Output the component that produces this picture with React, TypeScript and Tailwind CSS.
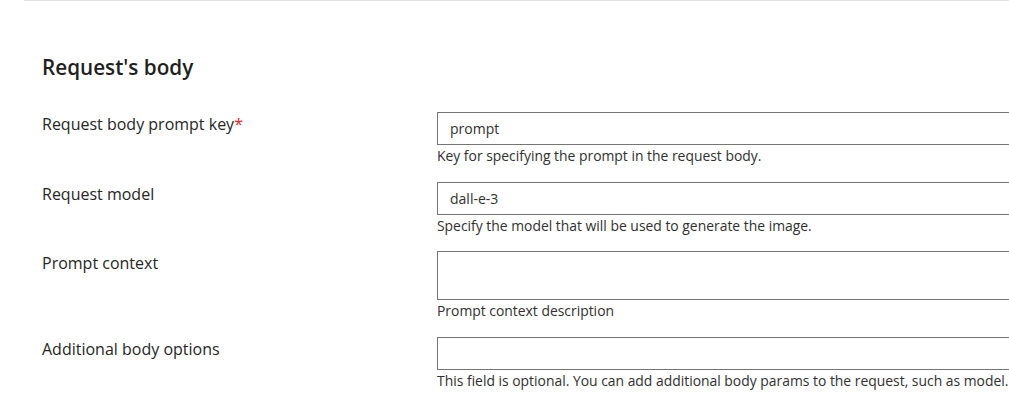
import React from "react";

type Field = {
  label: string;
  required?: boolean;
  value: string;
  note: string;
  multiline?: boolean;
};

const fields: Field[] = [
  {
    label: "Request body prompt key",
    required: true,
    value: "prompt",
    note: "Key for specifying the prompt in the request body.",
  },
  {
    label: "Request model",
    value: "dall-e-3",
    note: "Specify the model that will be used to generate the image.",
  },
  {
    label: "Prompt context",
    value: "",
    note: "Prompt context description",
    multiline: true,
  },
  {
    label: "Additional body options",
    value: "",
    note: "This field is optional. You can add additional body params to the request, such as model.",
  },
];

const App = () => {
  return (
    <div className="w-full h-[411px] overflow-hidden bg-white pl-6 font-['Open_Sans',sans-serif] text-[#303030]">
      <div className="w-[1200px] border-t border-[#e3e3e3] pl-[18px]">
        <h2 className="mt-[52px] text-[20.7px] leading-7 font-semibold text-[#1f1f1f]">
          Request&apos;s body
        </h2>

        <div className="mt-[31px] flex flex-col">
          {fields.map((f) => (
            <div key={f.label} className="flex items-start pb-[16.7px]">
              <label className="w-[395px] shrink-0 text-[16px] leading-6 text-[#262626]">
                {f.label}
                {f.required && <span className="text-[#e22626]">*</span>}
              </label>
              <div className="flex-1 flex flex-col">
                {f.multiline ? (
                  <textarea
                    defaultValue={f.value}
                    className="h-[49px] w-full resize-none border border-[#757575] px-3 py-[6px] text-[14px] outline-none"
                  />
                ) : (
                  <input
                    defaultValue={f.value}
                    className="h-[33px] w-full border border-[#757575] px-3 text-[14px] text-[#303030] outline-none"
                  />
                )}
                <p className="mt-[1px] whitespace-nowrap text-[13.9px] leading-[19px] text-[#303030]">
                  {f.note}
                </p>
              </div>
            </div>
          ))}
        </div>
      </div>
    </div>
  );
};

export default App;
